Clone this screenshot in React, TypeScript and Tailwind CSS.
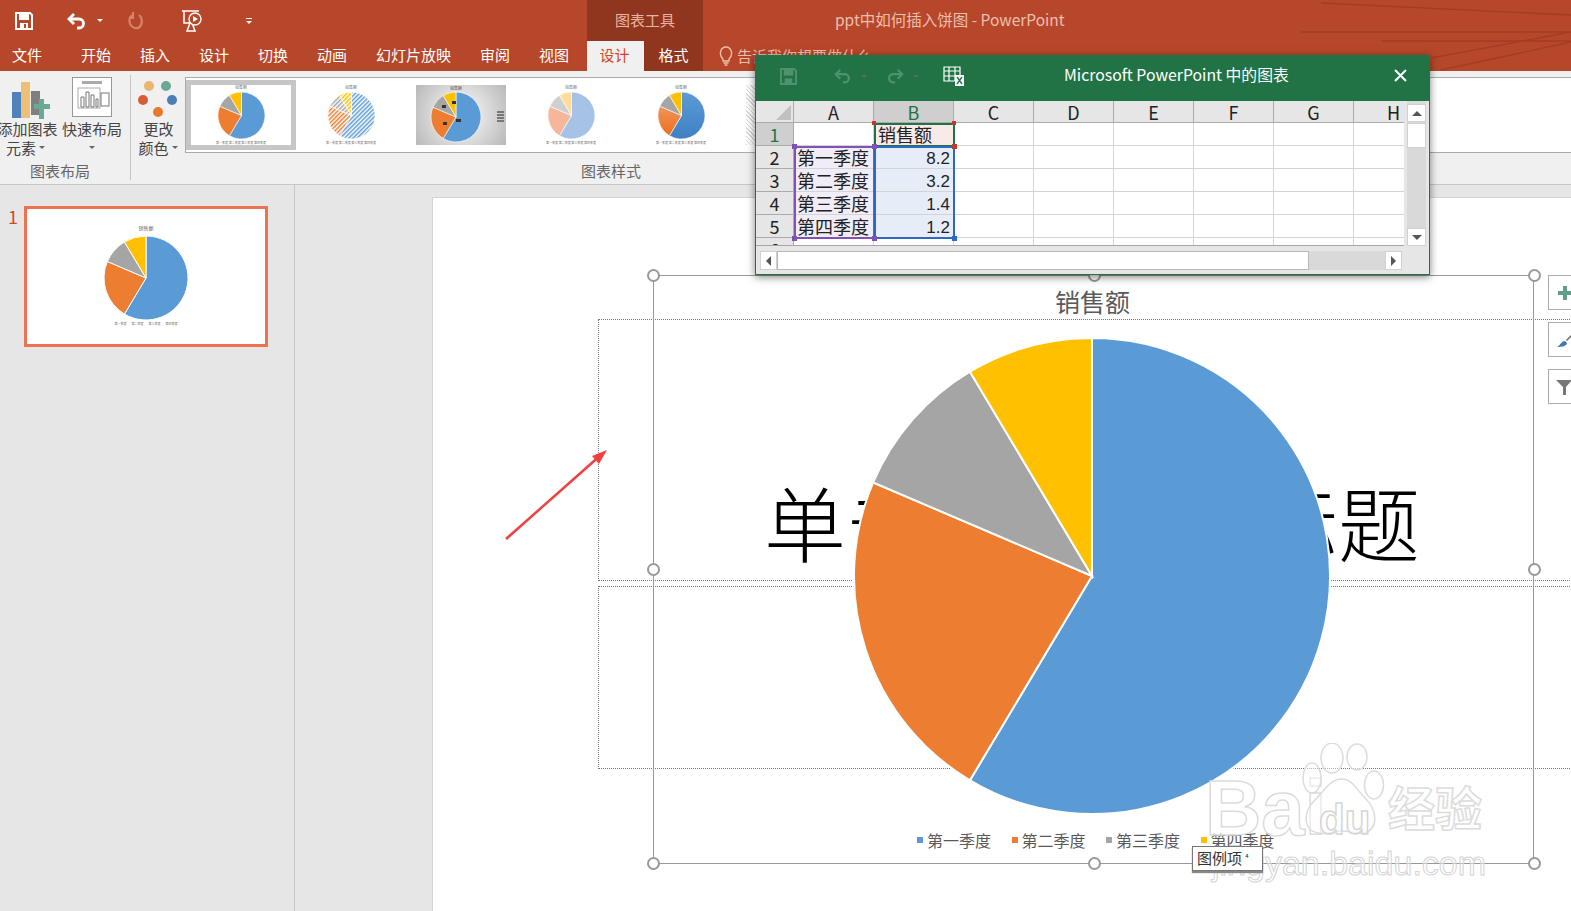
import React from "react";

const cjk = "font-['Noto_Sans_CJK_SC','Liberation_Sans',sans-serif]";
const data = [8.2, 3.2, 1.4, 1.2];
const office = ["#5b9bd5", "#ed7d31", "#a5a5a5", "#ffc000"];
const pale = ["#a6c3e6", "#f5b69c", "#cfcfcf", "#ffdc9a"];

function slices(cx: number, cy: number, r: number) {
  const total = data.reduce((a, b) => a + b, 0);
  let acc = 0;
  return data.map((v) => {
    const a0 = (acc / total) * Math.PI * 2;
    acc += v;
    const a1 = (acc / total) * Math.PI * 2;
    const large = a1 - a0 > Math.PI ? 1 : 0;
    const x0 = cx + r * Math.sin(a0);
    const y0 = cy - r * Math.cos(a0);
    const x1 = cx + r * Math.sin(a1);
    const y1 = cy - r * Math.cos(a1);
    return `M${cx} ${cy}L${x0} ${y0}A${r} ${r} 0 ${large} 1 ${x1} ${y1}Z`;
  });
}

const Pie = ({ size, colors, stroke = 1 }: { size: number; colors: string[]; stroke?: number }) => (
  <svg width={size} height={size} viewBox={`0 0 ${size} ${size}`} className="block">
    {slices(size / 2, size / 2, size / 2 - 1).map((d, i) => (
      <path key={i} d={d} fill={colors[i]} stroke="#fff" strokeWidth={stroke} />
    ))}
  </svg>
);

const Thumb = ({ colors, className = "" }: { colors: string[]; className?: string }) => (
  <div className={`flex flex-col items-center justify-between ${className}`}>
    <div className="text-[4px] leading-[5px] text-[#777]">销售额</div>
    <Pie size={49} colors={colors} stroke={0.6} />
    <div className="text-[3px] leading-[4px] text-[#777]">第一季度 第二季度 第三季度 第四季度</div>
  </div>
);

const Handle = ({ x, y }: { x: number; y: number }) => (
  <div
    className="absolute size-[13px] rounded-full border-[2.5px] border-[#999] bg-white"
    style={{ left: x - 6.5, top: y - 6.5 }}
  />
);

const Caret = ({ className = "" }: { className?: string }) => (
  <span className={`inline-block h-0 w-0 border-x-[3px] border-t-[3px] border-x-transparent border-t-[#666] ${className}`} />
);

const TitleBar = () => (
  <div className="relative flex h-[41px] items-center">
    <svg width="18" height="18" viewBox="0 0 18 18" className="ml-[15px]">
      <path d="M1 1h14l2 2v14H1z" fill="none" stroke="#fff" strokeWidth="2" />
      <rect x="4" y="1" width="10" height="7" fill="#fff" />
      <rect x="5" y="11" width="8" height="6" fill="#fff" />
      <rect x="9" y="12" width="2" height="4" fill="#b7472a" />
    </svg>
    <svg width="22" height="20" viewBox="0 0 22 20" className="ml-[33px]">
      <path d="M8 3 3 8l5 5" fill="none" stroke="#fff" strokeWidth="2.8" />
      <path d="M4 8h9c6 0 6 9 0 9h-2" fill="none" stroke="#fff" strokeWidth="2.8" />
    </svg>
    <Caret className="ml-[9px] border-t-white" />
    <svg width="20" height="20" viewBox="0 0 20 20" className="ml-[23px]">
      <path d="M7 4C2 6 2 15 9 17c7 1 9-9 4-13" fill="none" stroke="#d4836c" strokeWidth="2.2" />
      <path d="M7 1v6H3" fill="none" stroke="#d4836c" strokeWidth="2" />
    </svg>
    <svg width="22" height="24" viewBox="0 0 22 24" className="ml-[35px]">
      <path d="M1 2h17M3 2v12h9M9 14l-3 8h8l-3-8" fill="none" stroke="#fff" strokeWidth="1.5" />
      <circle cx="14" cy="10" r="6" fill="#b7472a" stroke="#fff" strokeWidth="1.4" />
      <path d="M12 7l5 3-5 3z" fill="#fff" />
    </svg>
    <div className="ml-[43px] flex flex-col items-center gap-[2px]">
      <span className="h-px w-[6px] bg-white" />
      <Caret className="border-t-white" />
    </div>
    <div className="absolute left-[835px] top-[8px] text-[15.500px] leading-[22px] text-[#eebfae]">ppt中如何插入饼图 - PowerPoint</div>
    <div className="absolute left-[587px] top-0 flex h-[41px] w-[116px] items-center justify-center bg-[#90361f] text-[15px] text-[#e8b4a2]">
      图表工具
    </div>
    <svg width="270" height="71" viewBox="0 0 270 71" className="absolute left-[1301px] top-0">
      <g stroke="#a23d24" strokeWidth="1.4" fill="none">
        <path d="M20 3 270 15M0 32h270M80 41h190M130 58 270 32M140 70 270 42" />
      </g>
    </svg>
  </div>
);

const tabs = ["开始", "插入", "设计", "切换", "动画", "幻灯片放映", "审阅", "视图"];

const TabRow = () => (
  <div className="flex h-[30px] items-center text-[15px] text-white">
    <span className="mb-[2px] ml-3 w-[69px]">文件</span>
    <div className="mb-[2px] flex w-[506px] gap-[29px]">
      {tabs.map((t) => (
        <span key={t}>{t}</span>
      ))}
    </div>
    <div className="flex h-full w-[57px] items-center justify-center bg-[#f0f0f0] pb-[2px] pr-[2px] text-[#d24726]">设计</div>
    <div className="flex h-full w-[59px] items-center justify-center bg-[#90361f] pb-[2px]">格式</div>
    <svg width="14" height="20" viewBox="0 0 14 20" className="ml-[16px]">
      <path d="M4 13C-1 8 2 1 7 1s8 7 3 12v2H4zM4.500 17h5M5.500 19h3" fill="none" stroke="#eebfae" strokeWidth="1.4" />
    </svg>
    <span className="ml-[4px] text-[#eebfae]">告诉我你想要做什么</span>
  </div>
);

const Ribbon = () => (
  <div className="flex h-[114px] border-b border-[#c6c6c6] bg-[#f0f0f0] text-[15px] leading-[19px] text-[#444]">
    <div className="relative my-[4px] flex w-[131px] shrink-0 flex-col border-r border-[#c6c6c6]">
      <div className="flex h-[91px]">
        <div className="flex w-[55px] flex-col items-center">
          <svg width="40" height="40" viewBox="0 0 40 40" className="-mb-[1px] ml-[4px] mt-[5px]">
            <rect x="2" y="12" width="9" height="26" fill="#4f81bd" />
            <rect x="11" y="2" width="9" height="36" fill="#eebf77" />
            <rect x="21" y="11" width="9" height="24" fill="#7f7f7f" />
            <path d="M24 24h5v-5h5v5h6v5h-6v10h-5V29h-5z" fill="#6ba896" />
          </svg>
          <span className="whitespace-nowrap">添加图表</span>
          <span className="-ml-[4px] flex items-center gap-[3px]">
            元素
            <Caret />
          </span>
        </div>
        <div className="ml-[7px] flex w-[60px] flex-col items-center">
          <svg width="40" height="40" viewBox="0 0 40 40" className="mt-[2px]">
            <rect x=".5" y=".5" width="39" height="39" fill="#fff" stroke="#999" />
            <rect x="10" y="4" width="20" height="3" fill="#aaa" />
            <rect x="6" y="11" width="22" height="20" fill="none" stroke="#aaa" />
            <path d="M9 30V20h3v10zM14 30V15h3v15zM19 30V18h3v12zM24 30V22h2v8z" fill="none" stroke="#777" />
            <rect x="29" y="16" width="8" height="13" fill="none" stroke="#777" />
          </svg>
          <span className="mt-[2px] whitespace-nowrap">快速布局</span>
          <Caret className="mt-[8px]" />
        </div>
      </div>
      <div className="pl-[30px] text-[#666]">图表布局</div>
    </div>
    <div className="flex min-w-0 flex-1 flex-col pt-[6px]">
      <div className="flex h-[84px]">
        <div className="flex w-[54px] shrink-0 flex-col items-center">
          <svg width="40" height="40" viewBox="0 0 40 40">
            <circle cx="11" cy="9" r="5" fill="#eab56f" />
            <circle cx="28" cy="9" r="5" fill="#6ba896" />
            <circle cx="5" cy="23" r="5" fill="#d95c39" />
            <circle cx="34" cy="23" r="5" fill="#4a7fb5" />
            <circle cx="20" cy="35" r="5" fill="#e8782c" />
          </svg>
          <span className="mt-[2px] pl-[1px]">更改</span>
          <span className="flex items-center gap-[3px]">
            颜色
            <Caret />
          </span>
        </div>
        <div className="flex h-[76px] min-w-0 flex-1 items-center border-y border-l border-[#ababab] bg-white">
          <div className="flex h-[70px] w-[110px] shrink-0 items-center justify-center bg-[#c6c6c6]">
            <Thumb colors={office} className="h-[60px] w-[100px] bg-white" />
          </div>
          <div className="ml-[10px] w-[90px] shrink-0">
            <Thumb colors={["url(#h1)", "url(#h2)", "url(#h3)", "url(#h4)"]} className="h-[60px]" />
          </div>
          <div className="relative ml-[20px] flex h-[60px] w-[90px] shrink-0 flex-col items-start bg-[radial-gradient(circle,#ffffff,#b8b8b8)] pl-[14px]">
            <div className="w-[52px] text-center text-[4px] leading-[6px] text-[#555]">销售额</div>
            <Pie size={52} colors={office} stroke={0.6} />
            <span className="absolute left-[40px] top-[34px] h-[3px] w-[5px] bg-[#333]" />
            <span className="absolute left-[26px] top-[20px] h-[3px] w-[4px] bg-[#333]" />
            <span className="absolute left-[36px] top-[16px] h-[3px] w-[4px] bg-[#333]" />
            <span className="absolute left-[27px] top-[37px] h-[3px] w-[4px] bg-[#333]" />
            <div className="absolute left-[81px] top-[26px] flex w-[7px] flex-col gap-px">
              <span className="h-[2px] bg-[#777]" />
              <span className="h-[2px] bg-[#777]" />
              <span className="h-[2px] bg-[#777]" />
              <span className="h-[2px] bg-[#777]" />
            </div>
          </div>
          <div className="ml-[20px] w-[90px] shrink-0">
            <Thumb colors={pale} className="h-[60px]" />
          </div>
          <div className="ml-[20px] w-[90px] shrink-0">
            <Thumb colors={["url(#g1)", "url(#g2)", "#a5a5a5", "#ffc000"]} className="h-[60px]" />
          </div>
          <div className="ml-[20px] h-[60px] w-[10px] shrink-0 bg-[repeating-linear-gradient(45deg,#d8d8d8_0_1px,#ffffff_1px_3px)]" />
        </div>
      </div>
      <div className="pl-[450px] text-[#666]">图表样式</div>
    </div>
  </div>
);

const ThumbPanel = () => (
  <div className="flex w-[295px] shrink-0 border-r border-[#c6c6c6] bg-[#e6e6e6] pl-[8px] pt-[21px]">
    <span className="w-[16px] text-[18px] leading-[20px] text-[#d24726]">1</span>
    <div className="flex h-[141px] w-[244px] flex-col items-center border-[3px] border-[#f0714f] bg-white pt-[16px]">
      <div className="text-[5px] leading-[6px] text-[#666]">销售额</div>
      <div className="mt-[4px]">
        <Pie size={86} colors={office} stroke={1} />
      </div>
      <div className="mt-[1px] flex gap-[5px] text-[3px] leading-[5px] text-[#777]">
        <span>第一季度</span>
        <span>第二季度</span>
        <span>第三季度</span>
        <span>第四季度</span>
      </div>
    </div>
  </div>
);

const Legend = () => (
  <div className="absolute left-[484px] top-[632px] flex text-[16px] leading-[20px] text-[#595959]">
    {["第一季度", "第二季度", "第三季度", "第四季度"].map((t, i) => (
      <div key={t} className="flex w-[94.500px] items-center gap-[4px] whitespace-nowrap">
        <span className="size-[6px] shrink-0" style={{ backgroundColor: office[i] }} />
        {t}
      </div>
    ))}
  </div>
);

const Watermark = () => (
  <div className="pointer-events-none absolute left-[770px] top-[545px] h-[135px] w-[290px] font-['Liberation_Sans',sans-serif]">
    <span className="absolute left-[2px] top-[22px] text-[78px] font-bold leading-[86px] text-white/50 [-webkit-text-stroke:1.5px_#dcdcdc]">Bai</span>
    <svg width="84" height="94" viewBox="0 0 84 94" className="absolute left-[99px] top-0">
      <g fill="#fff" fillOpacity=".45" stroke="#dcdcdc" strokeWidth="1.5">
        <ellipse cx="10" cy="35" rx="9" ry="15" />
        <ellipse cx="30" cy="15" rx="11" ry="15" />
        <ellipse cx="55" cy="14" rx="10" ry="13" />
        <ellipse cx="72" cy="42" rx="9.500" ry="14" />
        <path d="M40 36c10 0 14 10 24 20 10 10 14 30-2 34-8 1-14-2-22-2s-14 4-24 2C2 88 0 70 12 58c12-12 16-22 28-22z" />
      </g>
    </svg>
    <span className="absolute left-[116px] top-[54px] text-[42px] font-bold leading-[46px] text-white/50 [-webkit-text-stroke:1.5px_#d6d6d6]">du</span>
    <span className={`absolute left-[185px] top-[36px] text-[47px] font-bold leading-[54px] text-white/50 [-webkit-text-stroke:1.5px_#dcdcdc] ${cjk}`}>经验</span>
    <span className="absolute left-[9px] top-[101px] whitespace-nowrap text-[34px] leading-[38px] text-white/40 [-webkit-text-stroke:1px_#d4d4d4]">jingyan.baidu.com</span>
  </div>
);

const Slide = () => (
  <div className="relative ml-[137px] mt-[12px] flex-1 border-l border-t border-[#d4d4d4] bg-white">
    <div className="absolute left-[165px] top-[121px] h-[262px] w-[1000px] border border-dotted border-[#777]" />
    <div className="absolute left-[165px] top-[388px] h-[183px] w-[1000px] border border-dotted border-[#777]" />
    <div className="absolute left-[331px] top-[268px] whitespace-nowrap text-[82px] font-light leading-[110px] text-black">
      单击此处添加标题
    </div>
    <div className="absolute left-[220px] top-[77px] h-[589px] w-[881px] border border-[#999]" />
    <div className="absolute left-[622px] top-[87px] text-[25px] leading-[32px] text-[#595959]">销售额</div>
    <div className="absolute left-[420px] top-[139px]">
      <Pie size={478} colors={office} stroke={2} />
    </div>
    <Legend />
    <Handle x={220} y={77} />
    <Handle x={661} y={77} />
    <Handle x={1101} y={77} />
    <Handle x={220} y={371} />
    <Handle x={1101} y={371} />
    <Handle x={220} y={665} />
    <Handle x={661} y={665} />
    <Handle x={1101} y={665} />
    <svg width="110" height="100" viewBox="0 0 110 100" className="absolute left-[71px] top-[250px]">
      <path d="M2 91 98 6" stroke="#f04040" strokeWidth="2.5" />
      <path d="M103 2 88 8l7 8z" fill="#f04040" />
    </svg>
    <div className="absolute left-[1115px] top-[77px] flex h-[35px] w-[40px] items-center border border-[#ababab] bg-white pl-[9px]">
      <svg width="14" height="14" viewBox="0 0 14 14"><path d="M5 0h4v5h5v4H9v5H5V9H0V5h5z" fill="#5f9e8a" /></svg>
    </div>
    <div className="absolute left-[1115px] top-[124px] flex h-[35px] w-[40px] items-center border border-[#ababab] bg-white pl-[8px]">
      <svg width="16" height="16" viewBox="0 0 16 16">
        <path d="M0 15C3 14 4 9 8 9l2 2c0 3-5 4-10 4z" fill="#3f78b5" />
        <path d="M9 8l6-6 1 1-6 6z" fill="#666" />
      </svg>
    </div>
    <div className="absolute left-[1115px] top-[171px] flex h-[35px] w-[40px] items-center border border-[#ababab] bg-white pl-[7px]">
      <svg width="16" height="16" viewBox="0 0 16 16"><path d="M0 1h16l-6 7v8H7V8z" fill="#777" /></svg>
    </div>
    <Watermark />
    <div className="absolute left-[759px] top-[648px] flex h-[25px] w-[71px] items-center border border-[#777] bg-white pl-[4px] text-[15px] text-[#333] shadow-[0_2px_1px_#888]">
      图例项
      <span className="ml-[3px] text-[9px]">⁴</span>
    </div>
  </div>
);

const colLetters = ["A", "B", "C", "D", "E", "F", "G", "H"];
const rows = [
  ["", "销售额"],
  ["第一季度", "8.2"],
  ["第二季度", "3.2"],
  ["第三季度", "1.4"],
  ["第四季度", "1.2"],
  ["", ""],
];

const Sheet = () => (
  <div className="relative h-[145px] w-[648px] shrink-0 overflow-hidden border-b border-[#a6a6a6] bg-white text-[18px] leading-[22px] text-[#222]">
    <div className="grid grid-cols-[38px_repeat(8,80px)] grid-rows-[22px_repeat(6,23px)]">
      <div className="relative border-b border-r border-[#ababab] bg-[#e6e6e6]">
        <span className="absolute bottom-[2px] right-[2px] h-0 w-0 border-b-[15px] border-l-[15px] border-b-[#c0c0c0] border-l-transparent" />
      </div>
      {colLetters.map((c) => (
        <div
          key={c}
          className={`flex items-center justify-center border-b border-r border-[#ababab] ${c === "B" ? "bg-[#cfcfcf] text-[#217346]" : "bg-[#e6e6e6]"}`}
        >
          {c}
        </div>
      ))}
      {rows.map((r, i) => (
        <React.Fragment key={i}>
          <div className={`flex items-center justify-center border-b border-r border-[#ababab] ${i === 0 ? "bg-[#cfcfcf] text-[#217346]" : "bg-[#e6e6e6]"}`}>
            {i + 1}
          </div>
          {colLetters.map((c, j) => {
            let cls = "";
            if (j === 0 && i >= 1 && i <= 4) cls = "bg-[#f1edf8] pl-[3px] whitespace-nowrap";
            if (j === 1 && i === 0) cls = "bg-[#f9eaea] pl-[4px] whitespace-nowrap";
            if (j === 1 && i >= 1 && i <= 4) cls = "bg-[#e6edf8] justify-end pr-[3px] pt-[3px] font-['Liberation_Sans',sans-serif] text-[17px]";
            return (
              <div key={c} className={`flex items-center border-b border-r border-[#d4d4d4] ${cls}`}>
                {r[j] ?? ""}
              </div>
            );
          })}
        </React.Fragment>
      ))}
    </div>
    {/* range highlights */}
    <div className="absolute left-[118px] top-[22px] h-[24px] w-[81px] border-2 border-[#217346]" />
    <div className="absolute left-[38px] top-[45px] h-[93px] w-[81px] border-2 border-[#8152b5]" />
    <div className="absolute left-[118px] top-[45px] h-[93px] w-[81px] border-2 border-[#2e6bc0]" />
    <span className="absolute left-[116px] top-[43px] size-[5px] bg-[#8152b5]" />
    <span className="absolute left-[196px] top-[43px] size-[5px] bg-[#c0392b]" />
    <span className="absolute left-[116px] top-[135px] size-[5px] bg-[#8152b5]" />
    <span className="absolute left-[196px] top-[135px] size-[5px] bg-[#2e6bc0]" />
    <span className="absolute left-[36px] top-[135px] size-[5px] bg-[#8152b5]" />
    <span className="absolute left-[36px] top-[43px] size-[5px] bg-[#8152b5]" />
    <span className="absolute left-[116px] top-[20px] size-[4px] bg-[#c0392b]" />
    <span className="absolute left-[196px] top-[20px] size-[4px] bg-[#c0392b]" />
  </div>
);

const ExcelWindow = () => (
  <div className="absolute left-[755px] top-[55px] flex h-[220px] w-[675px] flex-col border border-[#217346] bg-[#e6e6e6] shadow-[0_2px_8px_rgba(0,0,0,0.5)]">
    <div className="relative flex h-[45px] shrink-0 items-center bg-[#217346] pb-[5px]">
      <svg width="17" height="17" viewBox="0 0 18 18" className="ml-[24px]">
        <path d="M1 1h14l2 2v14H1z" fill="none" stroke="#4f9270" strokeWidth="2" />
        <rect x="4" y="1" width="10" height="7" fill="#4f9270" />
        <rect x="5" y="11" width="8" height="6" fill="#4f9270" />
      </svg>
      <svg width="20" height="18" viewBox="0 0 22 20" className="ml-[36px]">
        <path d="M8 3 3 8l5 5M4 8h9c6 0 6 9 0 9h-2" fill="none" stroke="#4f9270" strokeWidth="2.4" />
      </svg>
      <Caret className="ml-[8px] border-t-[#4f9270]" />
      <svg width="20" height="18" viewBox="0 0 22 20" className="ml-[18px]">
        <path d="M14 3l5 5-5 5M18 8H9c-6 0-6 9 0 9h2" fill="none" stroke="#4f9270" strokeWidth="2.4" />
      </svg>
      <Caret className="ml-[8px] border-t-[#4f9270]" />
      <svg width="21" height="20" viewBox="0 0 21 20" className="ml-[24px]">
        <path d="M1 1h16v14H1zM1 5h16M1 10h16M6 1v14M12 1v14" fill="none" stroke="#fff" strokeWidth="1.2" />
        <rect x="12" y="9" width="9" height="11" fill="#fff" />
        <path d="M14 11l5 7M19 11l-5 7" stroke="#217346" strokeWidth="1.3" />
      </svg>
      <div className="absolute left-[308px] top-[8px] whitespace-nowrap text-[15.800px] leading-[22px] text-white">Microsoft PowerPoint 中的图表</div>
      <svg width="13" height="13" viewBox="0 0 13 13" className="absolute left-[638px] top-[13px]">
        <path d="M1 1l11 11M12 1 1 12" stroke="#fff" strokeWidth="2" />
      </svg>
    </div>
    <div className="flex h-[145px] shrink-0">
      <Sheet />
      <div className="ml-[3px] flex w-[19px] flex-col bg-[#d9d9d9] pt-[3px]">
        <div className="flex h-[18px] items-center justify-center border border-[#d0d0d0] bg-white">
          <span className="h-0 w-0 border-x-[5px] border-b-[5px] border-x-transparent border-b-[#555]" />
        </div>
        <div className="mt-px h-[25px] border border-[#d0d0d0] bg-white" />
        <div className="mt-auto flex h-[18px] items-center justify-center border border-[#d0d0d0] bg-white">
          <span className="h-0 w-0 border-x-[5px] border-t-[5px] border-x-transparent border-t-[#555]" />
        </div>
      </div>
    </div>
    <div className="ml-[4px] mt-[5px] flex h-[19px] w-[642px] bg-[#d9d9d9]">
      <div className="flex w-[17px] items-center justify-center border border-[#d0d0d0] bg-white">
        <span className="h-0 w-0 border-y-[5px] border-r-[5px] border-y-transparent border-r-[#555]" />
      </div>
      <div className="w-[532px] border border-[#b8b8b8] bg-white" />
      <div className="ml-auto flex w-[17px] items-center justify-center border border-[#d0d0d0] bg-white">
        <span className="h-0 w-0 border-y-[5px] border-l-[5px] border-y-transparent border-l-[#555]" />
      </div>
    </div>
  </div>
);

export default function App() {
  return (
    <div className={`relative flex h-[911px] w-[1571px] flex-col overflow-hidden bg-[#e6e6e6] ${cjk}`}>
      <svg width="0" height="0" className="absolute">
        <defs>
          {[["h1", "#5b9bd5"], ["h2", "#ed7d31"], ["h3", "#a5a5a5"], ["h4", "#ffc000"]].map(([id, c]) => (
            <pattern key={id} id={id} width="3" height="3" patternUnits="userSpaceOnUse" patternTransform="rotate(45)">
              <rect width="3" height="3" fill="#fff" />
              <rect width="1.500" height="3" fill={c} />
            </pattern>
          ))}
          <linearGradient id="g1" x1="0" y1="0" x2="0" y2="1">
            <stop offset="0" stopColor="#5b9bd5" />
            <stop offset="1" stopColor="#3f80c4" />
          </linearGradient>
          <linearGradient id="g2" x1="0" y1="0" x2="0" y2="1">
            <stop offset="0" stopColor="#f0955a" />
            <stop offset="1" stopColor="#ea6f1c" />
          </linearGradient>
        </defs>
      </svg>
      <div className="h-[71px] shrink-0 bg-[#b7472a]">
        <TitleBar />
        <TabRow />
      </div>
      <Ribbon />
      <div className="flex min-h-0 flex-1">
        <ThumbPanel />
        <Slide />
      </div>
      <ExcelWindow />
    </div>
  );
}
